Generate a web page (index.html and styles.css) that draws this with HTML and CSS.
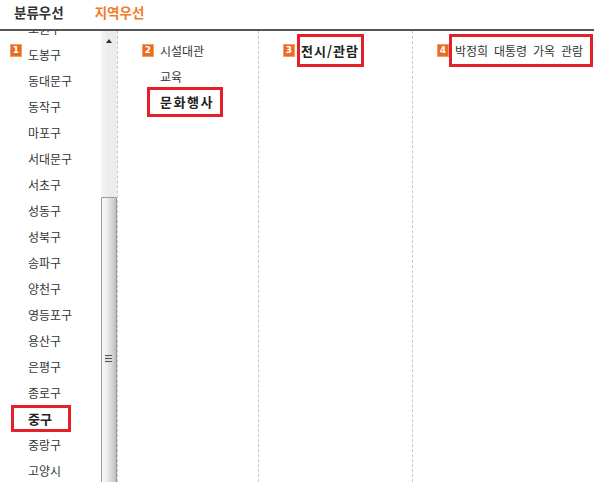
FILE: index.html
```html
<!DOCTYPE html>
<html lang="ko">
<head>
<meta charset="utf-8">
<title>지역우선</title>
<link rel="stylesheet" href="styles.css">
</head>
<body>
<div class="header">
  <span class="tab">분류우선</span>
  <span class="tab active">지역우선</span>
</div>
<div class="panes">
  <div class="pane pane1">
    <span class="badge b1">1</span>
    <div class="scrollbox">
      <ul class="list list1">
        <li>노원구</li>
        <li>도봉구</li>
        <li>동대문구</li>
        <li>동작구</li>
        <li>마포구</li>
        <li>서대문구</li>
        <li>서초구</li>
        <li>성동구</li>
        <li>성북구</li>
        <li>송파구</li>
        <li>양천구</li>
        <li>영등포구</li>
        <li>용산구</li>
        <li>은평구</li>
        <li>종로구</li>
        <li><span class="sel hl hl1">중구</span></li>
        <li>중랑구</li>
        <li>고양시</li>
      </ul>
    </div>
    <div class="scrollbar">
      <div class="arrow"></div>
      <div class="thumb"><div class="grip"></div></div>
    </div>
  </div>
  <div class="pane pane2">
    <span class="badge">2</span>
    <ul class="list">
      <li>시설대관</li>
      <li>교육</li>
      <li><span class="sel hl hl2">문화행사</span></li>
    </ul>
  </div>
  <div class="pane pane3">
    <span class="badge">3</span>
    <ul class="list">
      <li><span class="sel hl hl3">전시/관람</span></li>
    </ul>
  </div>
  <div class="pane pane4">
    <span class="badge">4</span>
    <ul class="list">
      <li><span class="hl hl4">박정희 대통령 가옥 관람</span></li>
    </ul>
  </div>
</div>
</body>
</html>
```

FILE: styles.css
```css
* { box-sizing: border-box; }
html, body { margin: 0; padding: 0; background: #fff; }
body {
  width: 594px;
  height: 482px;
  overflow: hidden;
  font-family: "Noto Sans CJK KR", "Noto Sans", sans-serif;
  font-size: 12px;
  color: #353535;
}
.header {
  display: flex;
  gap: 31px;
  height: 31px;
  padding: 4px 0 0 14px;
  border-bottom: 2px solid #555;
}
.tab {
  font-size: 13.5px;
  font-weight: bold;
  line-height: 16px;
  color: #333;
}
.tab.active { color: #f47a22; }

.panes {
  display: flex;
  height: 451px;
  overflow: hidden;
}
.pane {
  position: relative;
  border-right: 1px dashed #c8c8c8;
}
.pane1 { width: 118px; display: flex; }
.pane2 { width: 141px; padding-top: 6px; }
.pane3 { width: 154px; padding-top: 6px; }
.pane4 { flex: 1; padding-top: 6px; border-right: none; }

.badge {
  position: absolute;
  left: 24px;
  top: 13px;
  width: 12px;
  height: 13px;
  background: #ea6c22;
  box-shadow: inset 0 0 0 1px #f49c62;
  color: #fff;
  font-family: "DejaVu Sans", sans-serif;
  font-size: 9px;
  font-weight: bold;
  line-height: 13px;
  text-align: center;
  z-index: 2;
}
.badge.b1 { left: 10px; }

.list { list-style: none; margin: 0; padding: 0; }
.list li {
  display: flex;
  align-items: center;
  height: 26px;
  padding-left: 42px;
  white-space: nowrap;
}
.scrollbox { width: 101px; height: 451px; overflow: hidden; }
.list1 { margin-top: -16px; }
.list1 li { padding-left: 28px; }

.sel { font-weight: bold; font-size: 13px; color: #222; }
.hl { border: 3px solid #e5202a; display: inline-block; }
.hl1 { margin-left: -17px; padding: 0 16px 0 14px; line-height: 21px; }
.hl2 { margin-left: -13px; padding: 0 6px 0 10px; line-height: 24px; letter-spacing: 1.5px; }
.hl3 { margin-left: -4px; padding: 0 2px 0 1px; line-height: 27px; letter-spacing: 1px; }
.hl4 { margin-left: -6px; padding: 0 7px 0 3px; line-height: 27px; word-spacing: 2.5px; }

.scrollbar {
  width: 16px;
  height: 451px;
  background: linear-gradient(to right, #f7f7f7, #ececec 40%, #ececec);
  position: relative;
}
.arrow {
  margin: 8px auto 0;
  width: 0;
  height: 0;
  border-left: 3.5px solid transparent;
  border-right: 3.5px solid transparent;
  border-bottom: 4px solid #333;
}
.thumb {
  margin-top: 154px;
  height: 300px;
  border: 1px solid #9a9a9a;
  border-radius: 1px;
  background: linear-gradient(to right, #fafafa, #ededed 35%, #cfcfcf 80%, #bdbdbd);
  padding-top: 157px;
}
.grip {
  margin-left: 3px;
  width: 7px;
  height: 8px;
  background: repeating-linear-gradient(to bottom, #555 0 1px, #ddd 1px 3px);
}
```
